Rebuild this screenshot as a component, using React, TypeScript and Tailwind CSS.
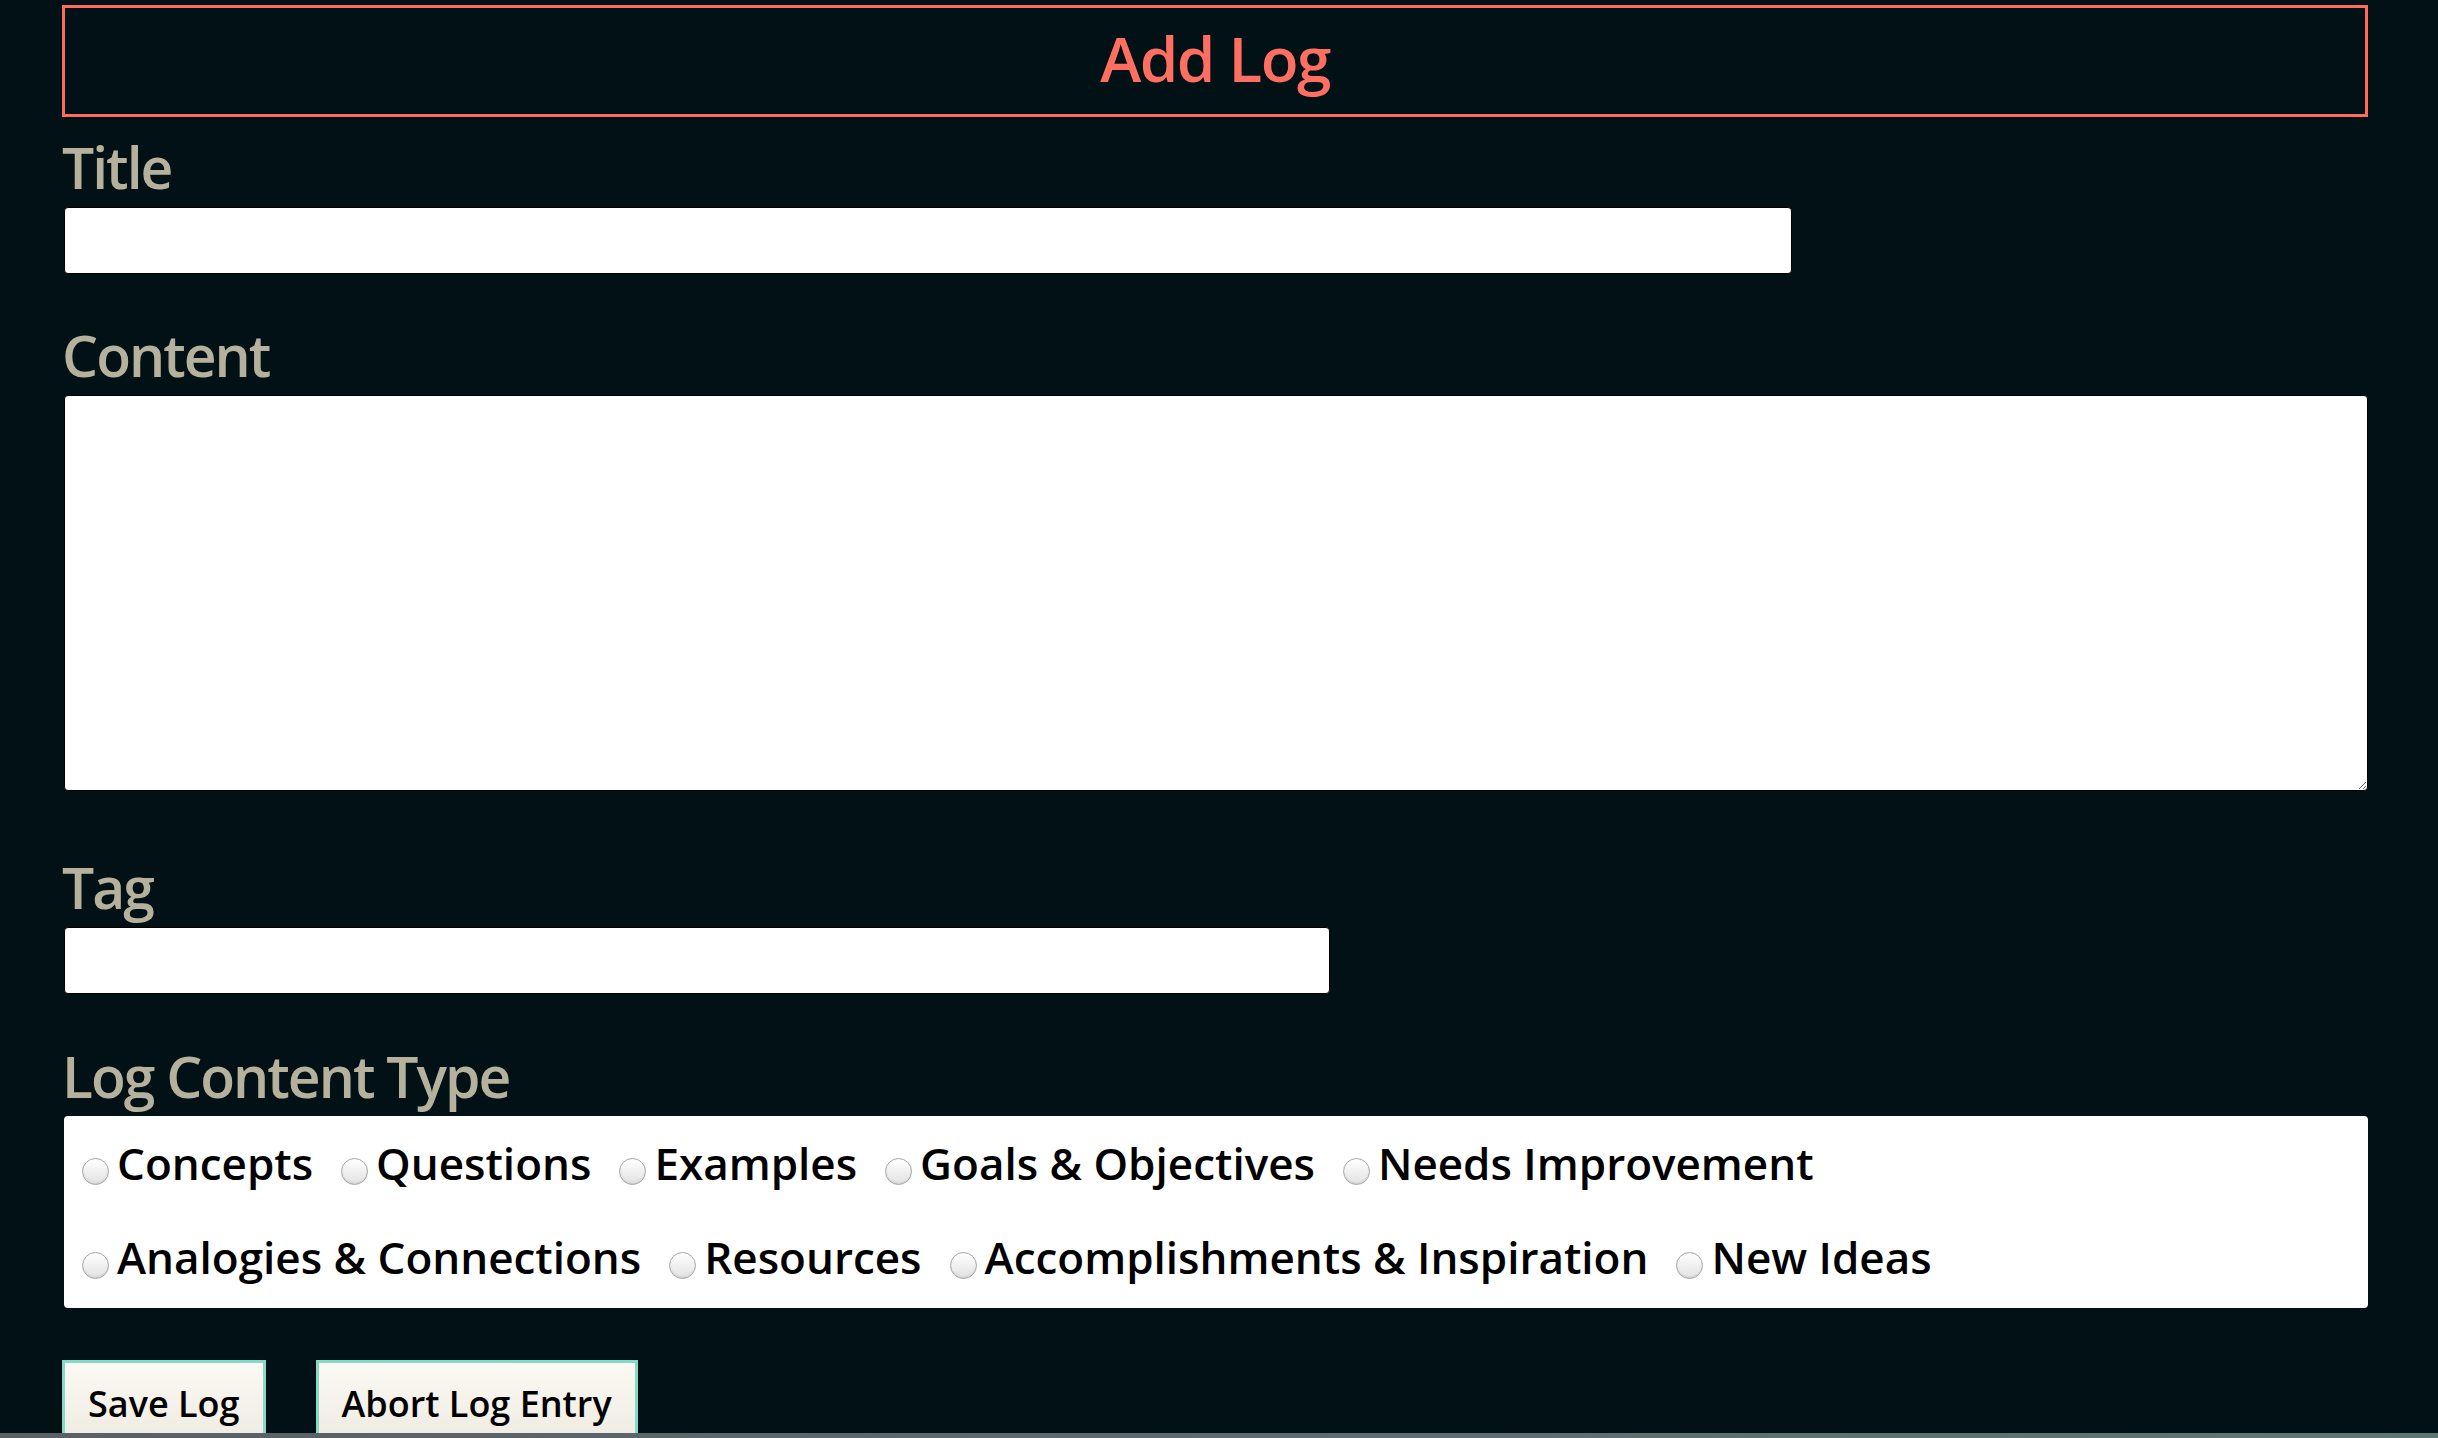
import React from "react";

const rows = [
  ["Concepts", "Questions", "Examples", "Goals & Objectives", "Needs Improvement"],
  ["Analogies & Connections", "Resources", "Accomplishments & Inspiration", "New Ideas"],
];

const labelCls =
  "block text-[57px] leading-[64px] font-semibold tracking-[-2px] text-[#b5b19c] mb-[8px]";

const btnCls =
  "border-[3px] border-[#86d9c4] bg-gradient-to-b from-[#fbf9f3] to-[#eeebe2] px-[23px] pt-[23px] pb-[20px] text-[36px] leading-[36px] font-semibold text-black";

export default function App() {
  return (
    <div className="w-[2438px] h-[1438px] flex flex-col bg-[#021115] font-['Open_Sans','Noto_Sans',sans-serif] overflow-hidden">
      <div className="h-[1433px] overflow-hidden pl-[62px] pr-[70px] pt-[5px]">
        {/* header */}
        <div className="h-[112px] border-[3px] border-[#ff6a5b] pb-[6px] text-center text-[62px] leading-[100px] font-semibold tracking-[-1.5px] text-[#ff6f61]">
          Add Log
        </div>

        <label className={labelCls + " mt-[18px]"}>Title</label>
        <input
          type="text"
          className="block ml-[2px] w-[1728px] h-[67px] bg-white rounded-[4px] border border-black outline-none"
        />

        <label className={labelCls + " mt-[49px]"}>Content</label>
        <textarea className="block ml-[2px] w-[2304px] h-[396px] bg-white rounded-[4px] border border-black outline-none" />

        <label className={labelCls + " mt-[64px]"}>Tag</label>
        <input
          type="text"
          className="block ml-[2px] w-[1266px] h-[67px] bg-white rounded-[4px] border border-black outline-none"
        />

        <label className={labelCls + " mt-[50px]"}>Log Content Type</label>
        <div className="ml-[2px] w-[2304px] h-[192px] bg-white rounded-[4px] pl-[18px] pb-[4px]">
          {rows.map((row, i) => (
            <div key={i} className="flex gap-x-[28px]">
              {row.map((t) => (
                <label key={t} className="flex items-baseline text-[44px] leading-[94px] font-semibold text-black whitespace-nowrap">
                  <span className="relative top-[5px] inline-block w-[27px] h-[27px] mr-[8px] rounded-full border border-[#a6a6a6] bg-gradient-to-b from-white to-[#e2e2e2] shadow-[inset_0_-1px_2px_rgba(0,0,0,0.1)]" />
                  {t}
                </label>
              ))}
            </div>
          ))}
        </div>

        <div className="mt-[52px] flex gap-[50px]">
          <button className={btnCls}>Save Log</button>
          <button className={btnCls}>Abort Log Entry</button>
        </div>
      </div>
      <div className="h-[5px] bg-gradient-to-r from-[#5a6065] via-[#5f6a70] to-[#5d7775]" />
    </div>
  );
}
